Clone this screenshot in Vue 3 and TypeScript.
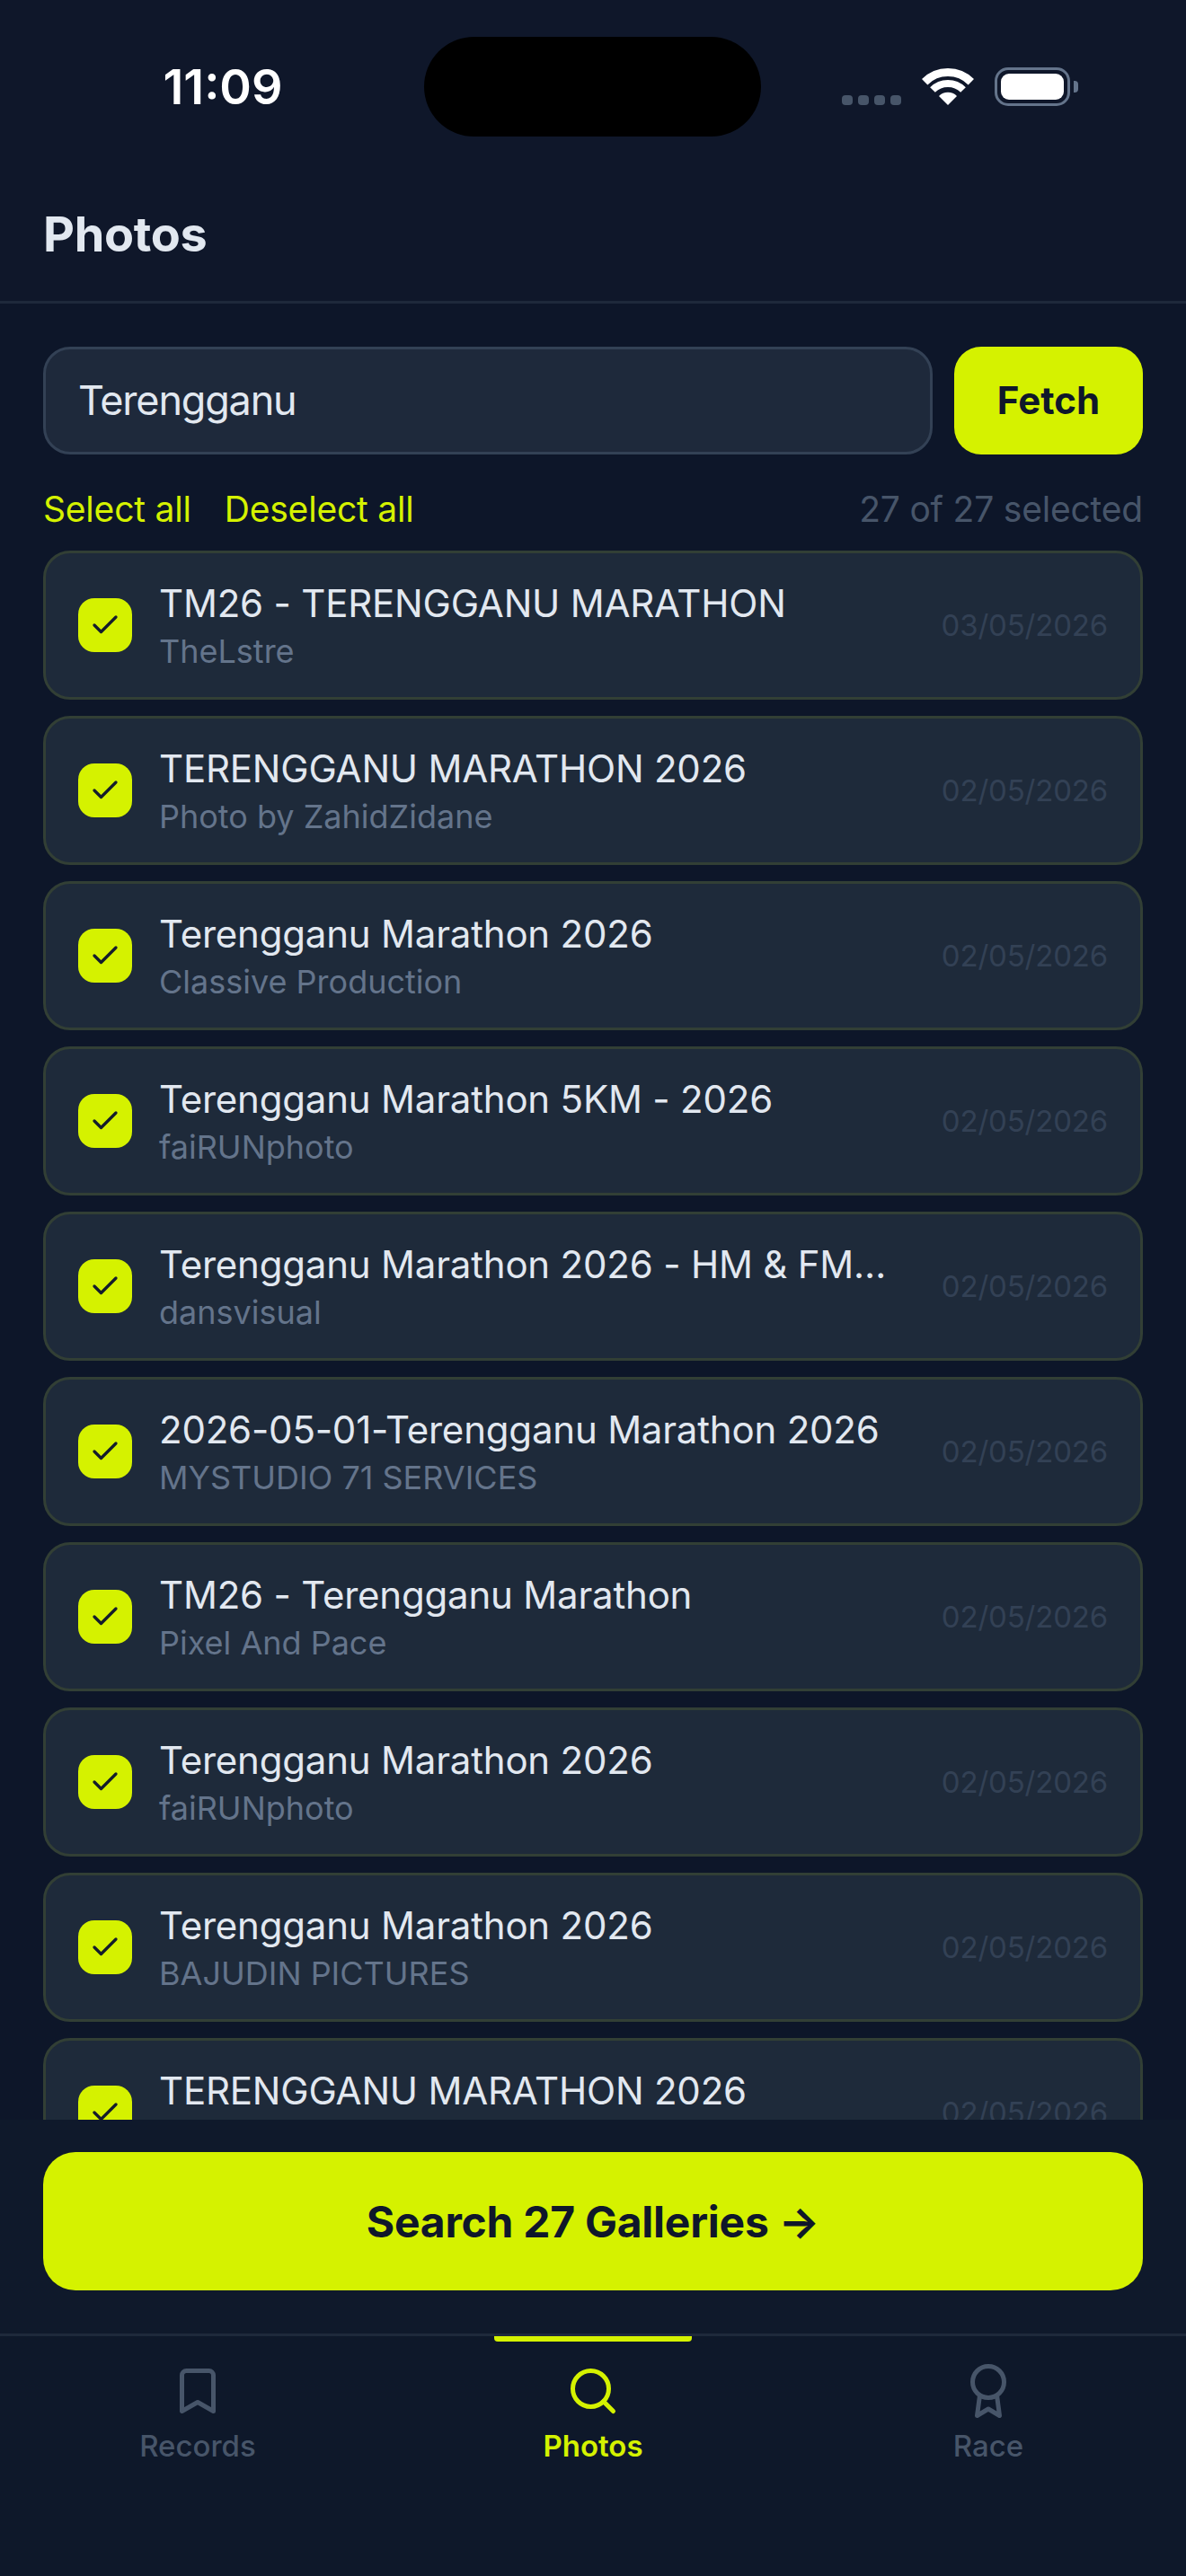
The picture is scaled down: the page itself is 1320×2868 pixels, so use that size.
<script setup lang="ts">
interface Gallery { title: string; by: string; date: string }
const galleries: Gallery[] = [
  { title: 'TM26 - TERENGGANU MARATHON', by: 'TheLstre', date: '03/05/2026' },
  { title: 'TERENGGANU MARATHON 2026', by: 'Photo by ZahidZidane', date: '02/05/2026' },
  { title: 'Terengganu Marathon 2026', by: 'Classive Production', date: '02/05/2026' },
  { title: 'Terengganu Marathon 5KM - 2026', by: 'faiRUNphoto', date: '02/05/2026' },
  { title: 'Terengganu Marathon 2026 - HM & FM…', by: 'dansvisual', date: '02/05/2026' },
  { title: '2026-05-01-Terengganu Marathon 2026', by: 'MYSTUDIO 71 SERVICES', date: '02/05/2026' },
  { title: 'TM26 - Terengganu Marathon', by: 'Pixel And Pace', date: '02/05/2026' },
  { title: 'Terengganu Marathon 2026', by: 'faiRUNphoto', date: '02/05/2026' },
  { title: 'Terengganu Marathon 2026', by: 'BAJUDIN PICTURES', date: '02/05/2026' },
  { title: 'TERENGGANU MARATHON 2026', by: '', date: '02/05/2026' },
]
</script>

<template>
  <div class="screen">
    <div class="status">
      <div class="time">11:09</div>
      <div class="island"></div>
      <div class="indicators">
        <div class="dots"><i></i><i></i><i></i><i></i></div>
        <svg class="wifi" width="58" height="42" viewBox="0 0 58 42" fill="none">
          <path d="M3.2 15.2A36.5 36.5 0 0 1 54.8 15.2" stroke="#fff" stroke-width="9" />
          <path d="M12 24A24 24 0 0 1 46 24" stroke="#fff" stroke-width="8" />
          <path d="M29 41L19 31A14 14 0 0 1 39 31Z" fill="#fff" />
        </svg>
        <div class="battery"><div class="fill"></div></div>
        <div class="nub"></div>
      </div>
    </div>

    <header class="header"><h1>Photos</h1></header>

    <main class="content">
      <div class="search">
        <div class="input">Terengganu</div>
        <div class="fetch">Fetch</div>
      </div>
      <div class="actions">
        <span class="link">Select all</span>
        <span class="link">Deselect all</span>
        <span class="count">27 of 27 selected</span>
      </div>
      <div class="list">
        <div v-for="(g, i) in galleries" :key="i" class="card">
          <div class="check">
            <svg width="36" height="36" viewBox="0 0 24 24" fill="none" stroke="#141c2b" stroke-width="2.2" stroke-linecap="round" stroke-linejoin="round">
              <polyline points="20 6 9 17 4 12" />
            </svg>
          </div>
          <div class="info">
            <div class="title">{{ g.title }}</div>
            <div class="by">{{ g.by }}</div>
          </div>
          <div class="date">{{ g.date }}</div>
        </div>
      </div>
    </main>

    <div class="cta-wrap">
      <div class="cta">Search 27 Galleries →</div>
    </div>

    <nav class="tabs">
      <div class="tab">
        <svg width="60" height="60" viewBox="0 0 24 24" fill="none" stroke="currentColor" stroke-width="2" stroke-linecap="round" stroke-linejoin="round">
          <path d="M19 21l-7-4-7 4V5a2 2 0 0 1 2-2h10a2 2 0 0 1 2 2z" />
        </svg>
        <span>Records</span>
      </div>
      <div class="tab active">
        <div class="indicator"></div>
        <svg width="60" height="60" viewBox="0 0 24 24" fill="none" stroke="currentColor" stroke-width="2" stroke-linecap="round" stroke-linejoin="round">
          <circle cx="11" cy="11" r="8" />
          <line x1="21" y1="21" x2="16.65" y2="16.65" />
        </svg>
        <span>Photos</span>
      </div>
      <div class="tab">
        <svg width="60" height="60" viewBox="0 0 24 24" fill="none" stroke="currentColor" stroke-width="2" stroke-linecap="round" stroke-linejoin="round">
          <circle cx="12" cy="8" r="7" />
          <polyline points="8.21 13.89 7 23 12 20 17 23 15.79 13.88" />
        </svg>
        <span>Race</span>
      </div>
    </nav>
  </div>
</template>

<style>
html, body { margin: 0; background: #0f172a; }
</style>

<style scoped>
.screen {
  width: 1320px;
  height: 2868px;
  display: flex;
  flex-direction: column;
  overflow: hidden;
  background: #0f172a;
  font-family: Inter, "Noto Sans", sans-serif;
  color: #e2e8f0;
}
.status {
  height: 180px;
  flex: none;
  display: grid;
  grid-template-columns: 472px 375px 1fr;
  align-items: start;
}
.time {
  padding: 67px 0 0 24px;
  text-align: center;
  font-size: 54px;
  line-height: 60px;
  font-weight: 600;
  color: #fff;
}
.island {
  margin-top: 41px;
  height: 111px;
  border-radius: 56px;
  background: #000;
}
.indicators {
  display: flex;
  align-items: flex-start;
  padding: 75px 0 0 90px;
}
.dots { display: flex; gap: 6px; margin-top: 31px; }
.dots i { width: 12px; height: 11px; border-radius: 4px; background: #475569; }
.wifi { margin: 1px 0 0 23px; display: block; }
.battery {
  box-sizing: border-box;
  width: 84px;
  height: 43px;
  margin-left: 23px;
  padding: 4px;
  border: 3px solid #64748b;
  border-radius: 15px;
}
.fill { height: 100%; border-radius: 9px; background: #fff; }
.nub {
  width: 5px;
  height: 13px;
  margin: 15px 0 0 4px;
  border-radius: 0 4px 4px 0;
  background: #64748b;
}
.header {
  flex: none;
  height: 155px;
  box-sizing: content-box;
  border-bottom: 3px solid #1e293b;
  padding: 0 48px;
}
.header h1 {
  margin: 0;
  padding-top: 48px;
  font-size: 54px;
  line-height: 66px;
  font-weight: 700;
  letter-spacing: -0.3px;
}
.content {
  flex: 1;
  min-height: 0;
  overflow: hidden;
  padding: 48px 48px 0;
  background: #0d1629;
}
.search { display: flex; gap: 24px; height: 120px; }
.input {
  flex: 1;
  box-sizing: border-box;
  display: flex;
  align-items: center;
  padding: 0 36px 2px;
  border: 3px solid #334155;
  border-radius: 30px;
  background: #1e293b;
  font-size: 45px;
  font-weight: 400;
  letter-spacing: -1.2px;
  color: #e2e8f0;
}
.fetch {
  width: 210px;
  display: flex;
  align-items: center;
  justify-content: center;
  padding-bottom: 2px;
  box-sizing: border-box;
  border-radius: 30px;
  background: #d5f200;
  color: #0f172a;
  font-size: 42px;
  font-weight: 700;
}
.actions {
  display: flex;
  align-items: center;
  gap: 37px;
  height: 48px;
  margin: 36px 0 23px;
  font-size: 39px;
  letter-spacing: -0.2px;
}
.link { color: #d5f200; }
.count { margin-left: auto; color: #475569; }
.list { display: flex; flex-direction: column; gap: 18px; }
.card {
  box-sizing: border-box;
  height: 166px;
  flex: none;
  display: flex;
  align-items: center;
  gap: 30px;
  padding: 0 36px;
  border: 3px solid #323f35;
  border-radius: 30px;
  background: #1e2a3a;
}
.check {
  width: 60px;
  height: 60px;
  flex: none;
  display: flex;
  align-items: center;
  justify-content: center;
  border-radius: 18px;
  background: #d5f200;
}
.info { flex: 1; min-width: 0; }
.title {
  font-size: 42px;
  line-height: 54px;
  font-weight: 420;
  letter-spacing: -0.2px;
  white-space: nowrap;
  overflow: hidden;
  text-overflow: ellipsis;
}
.by {
  margin-top: 4px;
  min-height: 45px;
  font-size: 36px;
  line-height: 45px;
  color: #64748b;
}
.date { flex: none; font-size: 33px; letter-spacing: -0.2px; color: #334155; }
.cta-wrap {
  flex: none;
  height: 238px;
  box-sizing: border-box;
  padding: 36px 48px 0;
  background: #0f192b;
}
.cta {
  height: 154px;
  display: flex;
  align-items: center;
  justify-content: center;
  border-radius: 36px;
  background: #d5f200;
  color: #0f172a;
  font-size: 48px;
  font-weight: 700;
  letter-spacing: -0.26px;
}
.tabs {
  flex: none;
  height: 267px;
  box-sizing: content-box;
  border-top: 3px solid #1e293b;
  display: grid;
  grid-template-columns: repeat(3, 1fr);
  background: #0e182a;
}
.tab {
  position: relative;
  display: flex;
  flex-direction: column;
  align-items: center;
  padding-top: 31px;
  color: #475569;
  font-size: 33px;
  font-weight: 450;
}
.tab span { margin-top: 10px; line-height: 42px; }
.tab.active { color: #d5f200; font-weight: 600; }
.indicator {
  position: absolute;
  top: 0;
  left: 110px;
  width: 220px;
  height: 6px;
  border-radius: 0 0 4px 4px;
  background: #d5f200;
}
</style>
